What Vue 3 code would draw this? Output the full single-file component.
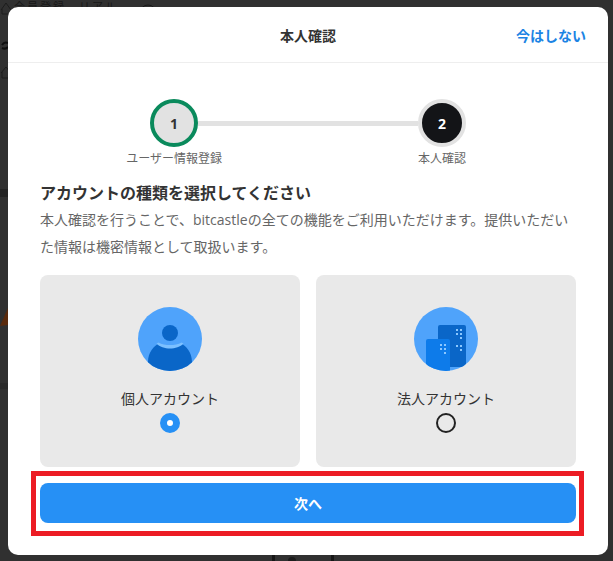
<script setup>
const accounts = [
  { id: 'personal', label: '個人アカウント', selected: true },
  { id: 'corporate', label: '法人アカウント', selected: false },
]
</script>

<template>
  <div class="page">
    <svg class="backdrop-art" viewBox="0 0 613 561" aria-hidden="true">
      <path d="M1 10 6 3l5 7M2 9v5h9" fill="none" stroke="#1c1c1c" stroke-width="1" />
      <path d="M1 73l5-6 5 6M2 72v6h9" fill="none" stroke="#1c1c1c" stroke-width="1" />
      <path d="M2 45c2-3 4-3 6-2M2 48c2 1 4 1 6-1" fill="none" stroke="#0d0d0d" stroke-width="2" />
      <rect x="0" y="189" width="8" height="8" fill="#232323" />
      <rect x="0" y="383" width="8" height="6" fill="#2a2a2a" />
      <path d="M0 326 8 308v17z" fill="#5a2a0c" />
      <circle cx="148" cy="13" r="8" fill="none" stroke="#181818" stroke-width="1" />
      <rect x="272" y="555" width="3" height="6" fill="#161616" />
      <rect x="331" y="555" width="3" height="6" fill="#161616" />
      <circle cx="292" cy="561" r="4" fill="#1c1c1c" />
    </svg>
    <div class="backdrop-text" aria-hidden="true">会員登録　リアル</div>
    <section class="modal">
      <header class="head">
        <span class="spacer"></span>
        <h1 class="title">本人確認</h1>
        <a class="skip">今はしない</a>
      </header>

      <div class="body">
        <div class="stepper">
          <div class="step">
            <div class="circle done">1</div>
            <div class="step-label">ユーザー情報登録</div>
          </div>
          <div class="line"></div>
          <div class="step">
            <div class="circle current">2</div>
            <div class="step-label">本人確認</div>
          </div>
        </div>

        <h2 class="heading">アカウントの種類を選択してください</h2>
        <p class="desc">本人確認を行うことで、bitcastleの全ての機能をご利用いただけます。提供いただいた情報は機密情報として取扱います。</p>

        <div class="cards">
          <div v-for="a in accounts" :key="a.id" class="card">
            <svg v-if="a.id === 'personal'" class="icon" viewBox="0 0 64 64">
              <defs>
                <clipPath id="clip-person"><circle cx="32" cy="32" r="32" /></clipPath>
              </defs>
              <circle cx="32" cy="32" r="32" fill="#4fa3fb" />
              <g clip-path="url(#clip-person)">
                <path d="M10 64V55C10 45 16 39 21 36.500c3 3 7 4 11 4s8-1 11-4c5 2.500 11 8.500 11 18.500v9z" fill="#0a66c8" />
                <path d="M20.500 35.500c3 2 7.500 2.500 11.500 2.500s8.500-.5 11.500-2.500l2 1c-3 3.500-8.500 5-13.500 5s-10.500-1.500-13.500-5z" fill="#7cc0ff" />
                <circle cx="32" cy="26" r="8" fill="#0a66c8" />
              </g>
            </svg>
            <svg v-else class="icon" viewBox="0 0 64 64">
              <defs>
                <clipPath id="clip-building"><circle cx="32" cy="32" r="32" /></clipPath>
              </defs>
              <circle cx="32" cy="32" r="32" fill="#4fa3fb" />
              <g clip-path="url(#clip-building)">
                <path d="M24 20a2 2 0 0 1 2-2h24a2 2 0 0 1 2 2v40H24z" fill="#0a66c8" />
                <path d="M12 34a2 2 0 0 1 2-2h20a2 2 0 0 1 2 2v30H12z" fill="#0d7bea" />
                <g fill="#8cc8ff">
                  <rect x="42" y="22" width="2" height="2" /><rect x="46" y="22" width="2" height="2" />
                  <rect x="42" y="26" width="2" height="2" /><rect x="46" y="26" width="2" height="2" />
                  <rect x="46" y="30" width="2" height="2" />
                  <rect x="42" y="38" width="2" height="2" /><rect x="46" y="38" width="2" height="2" />
                  <rect x="46" y="42" width="2" height="2" />
                  <rect x="26" y="37" width="2" height="2" /><rect x="30" y="37" width="2" height="2" />
                  <rect x="26" y="41" width="2" height="2" /><rect x="30" y="41" width="2" height="2" />
                  <rect x="30" y="45" width="2" height="2" />
                </g>
              </g>
            </svg>
            <div class="card-label">{{ a.label }}</div>
            <span class="radio" :class="{ on: a.selected }"></span>
          </div>
        </div>

        <div class="highlight">
          <button class="next" type="button">次へ</button>
        </div>
      </div>
    </section>
  </div>
</template>

<style scoped>
.page {
  position: relative;
  width: 613px;
  height: 561px;
  box-sizing: border-box;
  padding: 7px 5px 6px 8px;
  background: #303030;
  overflow: hidden;
  font-family: "Open Sans", "Noto Sans CJK JP", sans-serif;
}
.backdrop-art {
  position: absolute;
  inset: 0;
  width: 613px;
  height: 561px;
}
.backdrop-text {
  position: absolute;
  left: 14px;
  top: 0;
  font-size: 11px;
  line-height: 14px;
  letter-spacing: 2px;
  color: #181818;
}
.modal {
  position: relative;
  width: 600px;
  height: 548px;
  background: #fff;
  border-radius: 10px;
  display: flex;
  flex-direction: column;
}
.head {
  height: 56px;
  flex: none;
  box-sizing: border-box;
  border-bottom: 1px solid #eeeeee;
  display: grid;
  grid-template-columns: 1fr auto 1fr;
  align-items: center;
  padding: 0 22px;
}
.title {
  margin: 0;
  font-size: 14px;
  font-weight: 700;
  color: #333;
}
.skip {
  justify-self: end;
  font-size: 14px;
  font-weight: 700;
  color: #1b84e4;
}
.body {
  flex: 1;
  padding: 36px 23px 0;
  display: flex;
  flex-direction: column;
}
.stepper {
  width: 316px;
  margin: 0 auto 0 119px;
  display: flex;
  align-items: flex-start;
  justify-content: center;
}
.step {
  width: 48px;
  display: flex;
  flex-direction: column;
  align-items: center;
  flex: none;
}
.circle {
  width: 48px;
  height: 48px;
  box-sizing: border-box;
  border-radius: 50%;
  display: flex;
  align-items: center;
  justify-content: center;
  font-size: 14px;
  font-weight: 700;
}
.done {
  background: #e2e2e2;
  border: 4px solid #0a8a5c;
  color: #333;
}
.current {
  background: #131417;
  border: 4px solid #e2e2e2;
  color: #fff;
}
.line {
  flex: 1;
  height: 5px;
  margin-top: 22px;
  background: #e2e2e2;
}
.step-label {
  margin-top: 5px;
  font-size: 12px;
  line-height: 14px;
  color: #666;
  white-space: nowrap;
}
.heading {
  margin: 16px 0 0 9px;
  font-size: 16px;
  line-height: 22px;
  font-weight: 700;
  color: #333;
}
.desc {
  margin: 2px 0 0 9px;
  font-size: 14px;
  line-height: 27px;
  color: #666;
  width: 536px;
}
.cards {
  margin: 15px 0 0 9px;
  width: 536px;
  display: grid;
  grid-template-columns: 260px 260px;
  gap: 16px;
}
.card {
  height: 192px;
  box-sizing: border-box;
  padding-top: 32px;
  background: #e9e9e9;
  border-radius: 8px;
  display: flex;
  flex-direction: column;
  align-items: center;
}
.icon {
  width: 64px;
  height: 64px;
}
.card-label {
  margin-top: 18px;
  font-size: 14px;
  line-height: 20px;
  color: #333;
}
.radio {
  margin-top: 4px;
  width: 20px;
  height: 20px;
  box-sizing: border-box;
  border-radius: 50%;
  border: 2px solid #222;
}
.radio.on {
  border: 7px solid #2690f5;
  background: #fff;
}
.highlight {
  width: 553px;
  height: 65px;
  margin-top: 4px;
  box-sizing: border-box;
  border: 5px solid #ec1c24;
  padding: 7px 3px 8px 4px;
}
.next {
  display: block;
  width: 100%;
  height: 40px;
  border: 0;
  border-radius: 8px;
  background: #2690f5;
  color: #fff;
  font-family: inherit;
  font-size: 14px;
  font-weight: 700;
}
</style>
